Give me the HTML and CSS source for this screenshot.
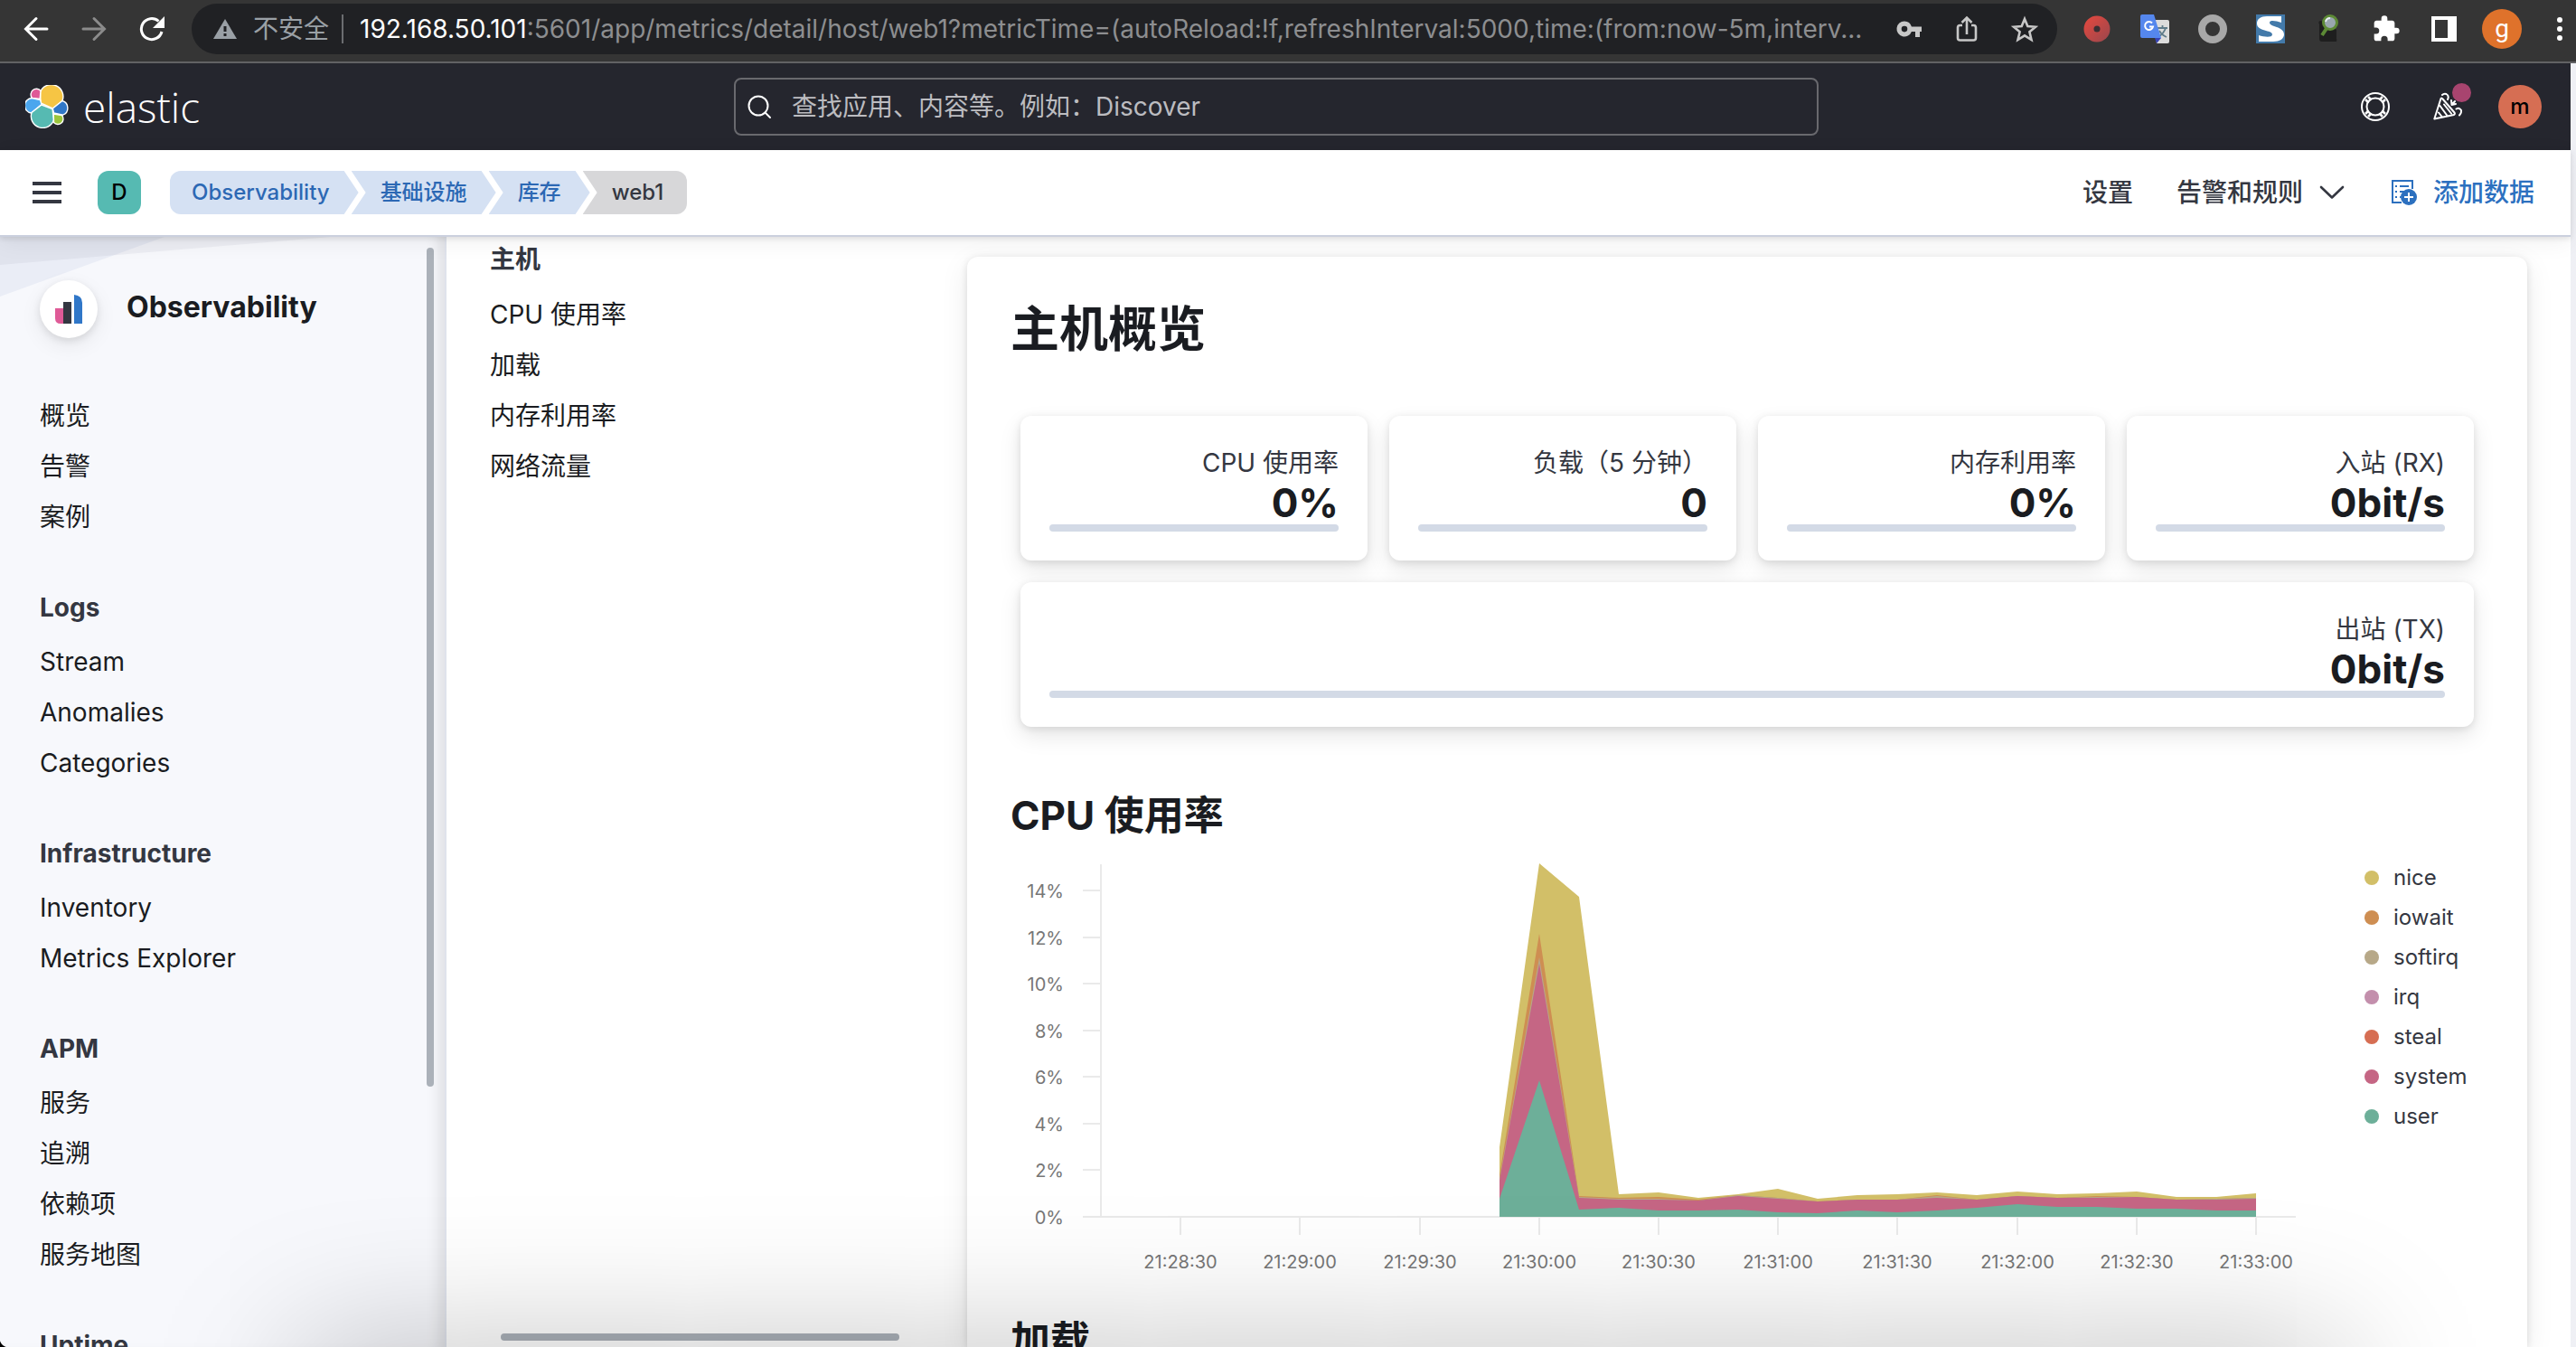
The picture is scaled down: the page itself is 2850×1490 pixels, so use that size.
FILE: index.html
```html
<!DOCTYPE html>
<html lang="zh-CN">
<head>
<meta charset="utf-8">
<title>web1 - 库存 - Observability - Elastic</title>
<link rel="stylesheet" href="styles.css">
</head>
<body>
<div class="browser">
  <button class="browser-btn" aria-label="后退"><svg width="28" height="28" viewBox="0 0 28 28"><path d="M26 14H3M14 2.500L2.500 14L14 25.500" fill="none" stroke="#fff" stroke-width="3" stroke-linecap="round"/></svg></button>
  <button class="browser-btn" aria-label="前进"><svg width="28" height="28" viewBox="0 0 28 28"><path d="M2 14H25M14 2.500L25.500 14L14 25.500" fill="none" stroke="#8b8b8b" stroke-width="3" stroke-linecap="round"/></svg></button>
  <button class="browser-btn" aria-label="重新加载"><svg width="28" height="28" viewBox="0 0 28 28"><path d="M25 17A11.500 11.500 0 1 1 21.500 5.500" fill="none" stroke="#fff" stroke-width="3"/><path d="M28 0V13H15Z" fill="#fff"/></svg></button>
  <div class="omnibox">
    <svg width="26" height="22" viewBox="0 0 26 22"><path d="M13 0L26 22H0Z" fill="#9aa0a6"/><path d="M11.500 8h3v6h-3zM11.500 16h3v3h-3z" fill="#202124"/></svg>
    <span class="insecure">不安全</span>
    <span class="omnibox-url"><b>192.168.50.101</b>:5601/app/metrics/detail/host/web1?metricTime=(autoReload:!f,refreshInterval:5000,time:(from:now-5m,interv...</span>
    <span class="omnibox-actions">
      <button aria-label="密码"><svg width="32" height="32" viewBox="0 0 32 32"><path d="M11 7.500a8.500 8.500 0 1 0 7.900 11.500H23v6h5v-6h2v-5.500H18.900A8.500 8.500 0 0 0 11 7.500zm0 5.300a3.300 3.300 0 1 1 0 6.600 3.300 3.300 0 0 1 0-6.600z" fill="#c7c7c7"/></svg></button>
      <button aria-label="分享"><svg width="32" height="32" viewBox="0 0 32 32"><path d="M11 12H8.500Q6 12 6 14.500V26Q6 28.500 8.500 28.500H23.500Q26 28.500 26 26V14.500Q26 12 23.500 12H21M16 22V4M10.500 9L16 3.500L21.500 9" fill="none" stroke="#c7c7c7" stroke-width="2.600"/></svg></button>
      <button aria-label="收藏"><svg width="32" height="32" viewBox="0 0 32 32"><path d="M16 5L19.300 13L28 13.700L21.400 19.300L23.500 28L16 23.300L8.500 28L10.600 19.300L4 13.700L12.700 13Z" fill="none" stroke="#c7c7c7" stroke-width="2.600"/></svg></button>
    </span>
  </div>
  <div class="extensions">
    <svg width="32" height="32" viewBox="0 0 32 32"><defs><linearGradient id="rec" x2="1" y2="1"><stop stop-color="#e8483e"/><stop offset="1" stop-color="#98474d"/></linearGradient></defs><circle cx="16" cy="16" r="14.500" fill="url(#rec)"/><circle cx="16" cy="16" r="3.500" fill="#3a2f33"/></svg>
    <svg width="32" height="32" viewBox="0 0 32 32"><path d="M15 6H30Q32 6 32 8V30Q32 32 30 32H18Z" fill="#dcdcdc"/><path d="M19 15H30M24.500 12V15M28 15Q26 21 20 25M21 18Q24 23 29 25" fill="none" stroke="#5f7c8a" stroke-width="1.800"/><path d="M16 26H23L18 32Z" fill="#3743b5"/><path d="M2 0H15L23 26H2Q0 26 0 24V2Q0 0 2 0Z" fill="#5587ed"/><path d="M13 9.500A4.500 4.500 0 1 0 14 13.500H10" fill="none" stroke="#fff" stroke-width="2"/></svg>
    <svg width="32" height="32" viewBox="0 0 32 32"><circle cx="16" cy="16" r="12" fill="none" stroke="#a8a8a8" stroke-width="8"/></svg>
    <svg width="32" height="32" viewBox="0 0 32 32"><path d="M0 0H32V32H0Z" fill="#437aaa"/><path d="M28 2H12C5 2 1 5 1 10C1 19 18 17 18 22C18 26 9 25 3 23V30H19C26 30 31 27 31 22C31 13 15 14 15 9C15 6 22 7 28 9Z" fill="#fff"/></svg>
    <svg width="32" height="32" viewBox="0 0 32 32"><path d="M8 7Q4 7 6 11V27Q6 30 9 30H24Q26 30 25 27V17" fill="#1e1e1e"/><path d="M15 14L9 23" stroke="#5c8a35" stroke-width="4"/><circle cx="18" cy="9" r="7.500" fill="#9aa7b0" stroke="#5d8a36" stroke-width="3"/><path d="M13 8A5 5 0 0 1 18 4" stroke="#e8eef2" stroke-width="2" fill="none"/></svg>
    <svg width="32" height="32" viewBox="0 0 24 24"><path d="M20.500 11H19V7c0-1.100-.9-2-2-2h-4V3.500a2.500 2.500 0 0 0-5 0V5H4c-1.100 0-2 .9-2 2v3.800h1.500a2.700 2.700 0 0 1 0 5.400H2V20c0 1.100.9 2 2 2h3.800v-1.500a2.700 2.700 0 0 1 5.400 0V22H17c1.100 0 2-.9 2-2v-4h1.500a2.500 2.500 0 0 0 0-5z" fill="#fff"/></svg>
    <svg width="32" height="32" viewBox="0 0 32 32"><path fill-rule="evenodd" d="M2 2H30V30H2ZM6 6V26H20V6Z" fill="#fff"/></svg>
  </div>
  <button class="profile">g</button>
  <button class="browser-menu" aria-label="菜单"><svg width="6" height="28" viewBox="0 0 6 28"><circle cx="3" cy="4" r="3"/><circle cx="3" cy="14" r="3"/><circle cx="3" cy="24" r="3"/></svg></button>
</div>

<div class="page">
  <header class="topbar">
    <a class="brand" href="#">
      <svg width="48" height="48" viewBox="0 0 48 48" stroke="#fff" stroke-width="1.400" stroke-linejoin="round">
        <path fill="#f6c544" d="M17 20L16.500 8A12.800 12.800 0 1 1 41 17.500L30.300 26Z"/>
        <path fill="#df5a97" d="M7.500 14.500A5.500 5.500 0 0 1 17 6.500L16.200 15.500Z"/>
        <path fill="#4ba6ee" d="M7.200 14.500L16.500 16.500L18 21.500L6.500 31A8.300 8.300 0 0 1 7.200 14.500Z"/>
        <path fill="#56bab2" d="M18 22L30 26.500L31.600 38.500A12.600 12.600 0 1 1 7 30.500Z"/>
        <path fill="#3077c8" d="M41 17.500A8.300 8.300 0 0 1 41.500 33.200L31.500 31L30.300 26Z"/>
        <path fill="#9bc53c" d="M31.200 32L40.500 33.500A5.300 5.300 0 0 1 31.500 41.500Z"/>
      </svg>
      <span class="brand-name">elastic</span>
    </a>
    <label class="search">
      <svg width="28" height="28" viewBox="0 0 28 28"><circle cx="13" cy="13" r="10.500" fill="none" stroke="#fff" stroke-width="2"/><path d="M20.500 20.500L26 26" stroke="#fff" stroke-width="2" stroke-linecap="round"/></svg>
      <input type="search" aria-label="搜索" placeholder="查找应用、内容等。例如：Discover">
    </label>
    <div class="topbar-actions">
      <button aria-label="帮助"><svg width="32" height="32" viewBox="0 0 32 32" fill="none" stroke="#fff" stroke-width="2"><circle cx="16" cy="16" r="15"/><circle cx="16" cy="16" r="9.500"/><path d="M5 8L8.500 11.500M8 5L11.500 8.500M24 5L20.500 8.500M27 8L23.500 11.500M5 24L8.500 20.500M8 27L11.500 23.500M27 24L23.500 20.500M24 27L20.500 23.500" stroke-width="2.600"/></svg></button>
      <button class="news" aria-label="新闻"><svg width="32" height="32" viewBox="0 0 32 32" fill="none" stroke="#fff" stroke-width="2" stroke-linecap="round" stroke-linejoin="round"><path d="M8.500 7L1.300 29.500L23 25Q24.500 24 23.500 22.500L10.500 7.500Q9.500 6 8.500 7ZM7.500 15L15.500 26M6 22.500L10 27.500M12 13.500L20 23.500M10 3Q12 1 14.500 2Q18 4 16 8M20 9L20.500 14L25 13M20.500 14L24 10M25.500 18.500Q29 16.500 31 20Q31.500 23 29 25.500"/></svg><span class="news-dot"></span></button>
      <button class="avatar">m</button>
    </div>
  </header>

  <div class="subbar">
    <button class="menu-toggle" aria-label="切换主导航"><span></span><span></span><span></span></button>
    <button class="space">D</button>
    <nav class="crumbs" aria-label="面包屑">
      <a href="#">Observability</a>
      <a href="#">基础设施</a>
      <a href="#">库存</a>
      <span aria-current="page">web1</span>
    </nav>
    <div class="subbar-links">
      <a href="#">设置</a>
      <button>告警和规则<svg width="28" height="16" viewBox="0 0 28 16"><path d="M2 2L14 13.500L26 2" fill="none" stroke="#343741" stroke-width="2.600" stroke-linecap="round" stroke-linejoin="round"/></svg></button>
      <a class="add-data" href="#"><svg width="28" height="28" viewBox="0 0 28 28"><path d="M11 25H1V1H23V10M9 7H19M9 13H15M9 19H10" fill="none" stroke="#2c70bf" stroke-width="2"/><path d="M4 6h2v2H4zM4 12h2v2H4zM4 18h2v2H4z" fill="#2c70bf"/><circle cx="19" cy="19" r="9" fill="#2c70bf"/><path d="M19 14V24M14 19H24" stroke="#fff" stroke-width="2"/></svg>添加数据</a>
    </div>
  </div>

  <div class="workspace">
    <aside class="sidebar">
      <svg class="sidebar-art" width="366" height="66" viewBox="0 0 366 66"><path d="M0 0H182L0 66Z" fill="#5b74b5" fill-opacity=".08"/><path d="M0 0H366L0 31Z" fill="#3c4664" fill-opacity=".06"/></svg>
      <div class="solution">
        <span class="solution-icon"><svg width="32" height="32" viewBox="0 0 32 32"><path d="M1 15H10V32H7Q1 32 1 26Z" fill="#df5a97"/><path d="M10 8H19V32H10Z" fill="#343741"/><path d="M22 0Q31 1 31 9V32H22Z" fill="#3077c8"/></svg></span>
        <h2>Observability</h2>
      </div>
      <nav class="side-nav">
        <ul><li><a href="#">概览</a></li><li><a href="#">告警</a></li><li><a href="#">案例</a></li></ul>
        <h3>Logs</h3>
        <ul><li><a href="#">Stream</a></li><li><a href="#">Anomalies</a></li><li><a href="#">Categories</a></li></ul>
        <h3>Infrastructure</h3>
        <ul><li><a href="#">Inventory</a></li><li><a href="#">Metrics Explorer</a></li></ul>
        <h3>APM</h3>
        <ul><li><a href="#">服务</a></li><li><a href="#">追溯</a></li><li><a href="#">依赖项</a></li><li><a href="#">服务地图</a></li></ul>
        <h3>Uptime</h3>
      </nav>
      <span class="thumb thumb-vertical"></span>
    </aside>

    <div class="content">
      <nav class="sections">
        <h3>主机</h3>
        <ul><li><a href="#cpu">CPU 使用率</a></li><li><a href="#load">加载</a></li><li><a href="#memory">内存利用率</a></li><li><a href="#network">网络流量</a></li></ul>
        <span class="thumb thumb-horizontal"></span>
      </nav>

      <main class="panel">
        <h1>主机概览</h1>
        <div class="stats">
          <div class="stat"><label for="s1">CPU 使用率</label><strong>0%</strong><progress id="s1" value="0" max="1"></progress></div>
          <div class="stat"><label for="s2">负载（5 分钟）</label><strong>0</strong><progress id="s2" value="0" max="1"></progress></div>
          <div class="stat"><label for="s3">内存利用率</label><strong>0%</strong><progress id="s3" value="0" max="1"></progress></div>
          <div class="stat"><label for="s4">入站 (RX)</label><strong>0bit/s</strong><progress id="s4" value="0" max="1"></progress></div>
          <div class="stat stat-wide"><label for="s5">出站 (TX)</label><strong>0bit/s</strong><progress id="s5" value="0" max="1"></progress></div>
        </div>

        <h2 id="cpu">CPU 使用率</h2>
        <div class="chart">
          <svg class="plot" viewBox="-2 0 1498 460" role="img" aria-label="CPU 使用率">
            <path class="axis" d="M98 5V395M78 395H1420M78 34H98M78 86H98M78 137H98M78 189H98M78 240H98M78 292H98M78 343H98"/>
            <path class="axis" d="M186 396V415M318 396V415M451 396V415M583 396V415M715 396V415M847 396V415M979 396V415M1112 396V415M1244 396V415M1376 396V415"/>
            <g class="tick tick-y">
              <text x="57" y="42">14%</text><text x="57" y="94">12%</text><text x="57" y="145">10%</text><text x="57" y="197">8%</text><text x="57" y="248">6%</text><text x="57" y="300">4%</text><text x="57" y="351">2%</text><text x="57" y="403">0%</text>
            </g>
            <g class="tick tick-x">
              <text x="186" y="452">21:28:30</text><text x="318" y="452">21:29:00</text><text x="451" y="452">21:29:30</text><text x="583" y="452">21:30:00</text><text x="715" y="452">21:30:30</text><text x="847" y="452">21:31:00</text><text x="979" y="452">21:31:30</text><text x="1112" y="452">21:32:00</text><text x="1244" y="452">21:32:30</text><text x="1376" y="452">21:33:00</text>
            </g>
            <polygon class="s-nice" points="539,395 539,318 583,4 627,41 671,370 715,368 759,374 803,370 847,364 891,375 935,371 979,370 1023,368 1067,371 1112,367 1156,370 1200,369 1244,367 1288,373 1332,373 1376,369 1376,395"/>
            <polygon class="s-iowait" points="539,395 539,349 583,82 627,372 671,374 715,373 759,376 803,371 847,374 891,378 935,376 979,376 1023,371 1067,376 1112,372 1156,374 1200,372 1244,373 1288,376 1332,375 1376,374 1376,395"/>
            <polygon class="s-softirq" points="539,395 539,353 583,108 627,373 671,375 715,375 759,377 803,371 847,374 891,378 935,376 979,376 1023,372 1067,376 1112,372 1156,374 1200,373 1244,373 1288,376 1332,375 1376,374 1376,395"/>
            <polygon class="s-system" points="539,395 539,355 583,115 627,374 671,376 715,376 759,377 803,372 847,375 891,378 935,376 979,376 1023,374 1067,376 1112,372 1156,374 1200,374 1244,373 1288,376 1332,376 1376,375 1376,395"/>
            <polygon class="s-user" points="539,395 539,375 583,244 627,387 671,385 715,388 759,388 803,387 847,390 891,391 935,388 979,390 1023,388 1067,385 1112,381 1156,384 1200,384 1244,386 1288,386 1332,388 1376,388 1376,395"/>
          </svg>
          <ul class="legend">
            <li><button class="s-nice">nice</button></li>
            <li><button class="s-iowait">iowait</button></li>
            <li><button class="s-softirq">softirq</button></li>
            <li><button class="s-irq">irq</button></li>
            <li><button class="s-steal">steal</button></li>
            <li><button class="s-system">system</button></li>
            <li><button class="s-user">user</button></li>
          </ul>
        </div>
        <h2 id="load">加载</h2>
      </main>
    </div>
  </div>
</div>
<div class="dock-shadow"></div>
<div class="window-corner"></div>
</body>
</html>
```
FILE: styles.css
```css
* { box-sizing: border-box; }

body {
  margin: 0;
  height: 100vh;
  display: flex;
  flex-direction: column;
  overflow: hidden;
  position: relative;
  background: #fff;
  color: #1a1c21;
  font: 400 28px/56px Inter, "Noto Sans CJK SC", sans-serif;
}

h1, h2, h3, ul { margin: 0; padding: 0; }
ul { list-style: none; }
a { color: inherit; text-decoration: none; }
button { margin: 0; padding: 0; border: 0; background: none; color: inherit; font: inherit; display: flex; align-items: center; }
svg { display: block; flex: none; }

/* Browser toolbar */
.browser {
  flex: none;
  height: 70px;
  padding: 0 15px 4px 26px;
  display: flex;
  align-items: center;
  background: #353535;
  border-bottom: 2px solid #626264;
}
.browser-btn { margin-right: 36px; }
.browser-btn:nth-child(3) { margin-right: 30px; }
.omnibox {
  flex: 1;
  min-width: 0;
  height: 56px;
  padding: 0 20px 0 24px;
  display: flex;
  align-items: center;
  border-radius: 28px;
  background: #202124;
  color: #8d8e90;
}
.insecure {
  margin-left: 18px;
  padding-right: 14px;
  line-height: 32px;
  border-right: 2px solid #6b6d70;
  color: #9aa0a6;
}
.omnibox-url {
  flex: 1;
  min-width: 0;
  margin-left: 18px;
  overflow: hidden;
  white-space: nowrap;
}
.omnibox-url b { color: #fff; font-weight: 400; }
.omnibox-actions { display: flex; gap: 32px; }
.extensions { margin-left: 28px; display: flex; gap: 32px; }
.profile {
  width: 44px;
  height: 44px;
  margin: 0 39px 0 26px;
  justify-content: center;
  border-radius: 50%;
  background: #df722b;
  color: #fff;
  font-family: Roboto, sans-serif;
}
.browser-menu { fill: #fff; }

/* Page frame: a light scroll gutter runs down the right edge */
.page {
  flex: 1;
  min-height: 0;
  display: flex;
  flex-direction: column;
  margin-right: 6px;
  box-shadow: 6px 0 #eff0f5;
}

/* Dark header */
.topbar {
  flex: none;
  height: 96px;
  padding: 0 32px 0 12px;
  display: grid;
  grid-template-columns: 1fr minmax(0, 1200px) 1fr;
  align-items: center;
  background: #25262e;
}
.brand { display: flex; align-items: center; gap: 16px; padding-left: 16px; color: #fff; }
.brand-name { font: 300 46px/48px "Open Sans", sans-serif; }
.search {
  height: 64px;
  padding: 0 12px;
  display: flex;
  align-items: center;
  gap: 22px;
  border: 2px solid #69696e;
  border-radius: 8px;
}
.search input {
  flex: 1;
  min-width: 0;
  height: 56px;
  padding: 0;
  border: 0;
  outline: 0;
  background: none;
  color: #fff;
  font: inherit;
}
.search input::placeholder { color: #bcbcc0; }
.topbar-actions { display: flex; justify-content: flex-end; align-items: center; gap: 48px; }
.news { position: relative; }
.news-dot { position: absolute; top: -10px; right: -10px; width: 21px; height: 21px; border-radius: 50%; background: #a8446f; }
.avatar {
  width: 48px;
  height: 48px;
  margin-left: -8px;
  justify-content: center;
  border-radius: 50%;
  background: #d66e53;
  color: #000;
  font-size: 24px;
  font-weight: 500;
}

/* Breadcrumb bar */
.subbar {
  flex: none;
  height: 96px;
  padding: 0 40px 0 36px;
  display: flex;
  align-items: center;
  position: relative;
  z-index: 2;
  background: #fff;
  border-bottom: 2px solid #cbd0de;
  box-shadow: 0 2px 6px rgba(0, 0, 0, .1), 0 6px 24px rgba(0, 0, 0, .06);
}
.menu-toggle { flex-direction: column; gap: 6px; width: 32px; }
.menu-toggle span { width: 32px; height: 4px; background: #343741; }
.space {
  width: 48px;
  height: 48px;
  margin: 0 32px 0 40px;
  justify-content: center;
  border-radius: 12px;
  background: #56bab2;
  color: #000;
  font-size: 24px;
  font-weight: 500;
}
.crumbs { display: flex; font-size: 24px; font-weight: 500; line-height: 48px; color: #2c68b4; }
.crumbs > * {
  margin-right: -8px;
  padding: 0 32px;
  background: #d5e1f3;
  clip-path: polygon(0 0, calc(100% - 16px) 0, 100% 50%, calc(100% - 16px) 100%, 0 100%, 16px 50%);
}
.crumbs > :first-child {
  padding-left: 24px;
  border-radius: 12px 0 0 12px;
  clip-path: polygon(0 0, calc(100% - 16px) 0, 100% 50%, calc(100% - 16px) 100%, 0 100%);
}
.crumbs > :last-child {
  padding-right: 26px;
  border-radius: 0 12px 12px 0;
  background: #d7d7d9;
  color: #343741;
  clip-path: polygon(0 0, 100% 0, 100% 100%, 0 100%, 16px 50%);
}
.subbar-links { margin-left: auto; display: flex; gap: 48px; font-weight: 500; color: #343741; }
.subbar-links button { gap: 18px; }
.add-data { display: flex; align-items: center; gap: 18px; margin-left: 4px; color: #2c70bf; }

/* Sidebar */
.workspace { flex: 1; min-height: 0; display: flex; }
.sidebar {
  flex: none;
  width: 494px;
  padding: 48px 44px 0;
  position: relative;
  overflow: hidden;
  background: #f7f8fc;
  border-right: 2px solid #dfe3ec;
  box-shadow: inset -16px 0 16px -10px rgba(0, 0, 0, .1);
}
.sidebar-art { position: absolute; top: 0; left: 0; }
.solution { position: relative; display: flex; gap: 32px; margin-bottom: 58px; }
.solution h2 { font-size: 32px; font-weight: 700; line-height: 60px; }
.solution-icon {
  flex: none;
  width: 64px;
  height: 64px;
  display: grid;
  place-items: center;
  border-radius: 50%;
  background: #fff;
  box-shadow: 0 3px 8px rgba(0, 0, 0, .1), 0 8px 24px rgba(0, 0, 0, .07);
}
.side-nav h3, .sections h3 { font-size: 28px; font-weight: 700; color: #343741; }
.side-nav h3 { margin: 44px 0 4px; }
.thumb { position: absolute; border-radius: 4px; background: #abb1b9; }
.thumb-vertical { top: 12px; right: 12px; bottom: 288px; width: 8px; }
.thumb-horizontal { left: 60px; right: 75px; bottom: 7px; height: 8px; }

/* Metrics detail */
.content { flex: 1; min-width: 0; display: flex; padding-right: 48px; overflow: hidden; }
.sections { flex: none; width: 576px; padding-left: 48px; position: relative; }
.sections h3 { margin-bottom: 8px; line-height: 50px; }
.panel {
  flex: 1;
  min-width: 0;
  margin-top: 22px;
  padding: 48px 48px 0;
  border-radius: 12px 12px 0 0;
  background: #fff;
  box-shadow: 0 2px 8px rgba(0, 0, 0, .12), 0 8px 32px rgba(0, 0, 0, .08);
}
.panel h1 { margin-bottom: 62px; font-size: 54px; font-weight: 700; line-height: 66px; }
.panel h2 { font-size: 44px; font-weight: 700; line-height: 56px; }
.stats { display: grid; grid-template-columns: repeat(4, minmax(0, 1fr)); gap: 24px; margin: 0 11px 70px; }
.stat {
  padding: 32px;
  display: flex;
  flex-direction: column;
  text-align: right;
  border-radius: 12px;
  background: #fff;
  box-shadow: 0 2px 8px rgba(0, 0, 0, .1), 0 10px 24px rgba(0, 0, 0, .1);
}
.stat-wide { grid-column: 1 / -1; }
.stat label { line-height: 40px; color: #343741; }
.stat strong { font-size: 44px; font-weight: 700; line-height: 48px; }
progress { display: block; appearance: none; width: 100%; height: 8px; border: 0; border-radius: 4px; overflow: hidden; background: #d3dae6; }
progress::-webkit-progress-bar { background: #d3dae6; }

.chart { display: flex; margin: 21px 0 44px; }
.plot { flex: 1; min-width: 0; }
.axis { fill: none; stroke: #eaeaea; stroke-width: 2; }
.tick { font-size: 20px; fill: #777; }
.tick-y { text-anchor: end; }
.tick-x { text-anchor: middle; }
.legend { flex: none; width: 132px; margin-top: -2px; font-size: 24px; line-height: 44px; }
.legend button { gap: 16px; }
.legend button::before { content: ""; width: 16px; height: 16px; border-radius: 50%; background: var(--series); }
.plot polygon { fill: var(--series); }
.legend button { color: #343741; }

.s-nice { --series: #d2bf68; }
.s-iowait { --series: #ce8e52; }
.s-softirq { --series: #b7a888; }
.s-irq { --series: #c38fac; }
.s-steal { --series: #d66e53; }
.s-system { --series: #c56684; }
.s-user { --series: #6daf99; }

/* Shade cast by the desktop dock just under the window */
.dock-shadow {
  position: absolute;
  z-index: 5;
  left: 330px;
  right: 260px;
  top: 100%;
  height: 200px;
  box-shadow: 0 0 160px rgba(0, 0, 0, .26);
  pointer-events: none;
}
.window-corner {
  position: absolute;
  z-index: 6;
  left: 0;
  bottom: 0;
  width: 10px;
  height: 10px;
  background: radial-gradient(circle at 100% 0, transparent 10px, #000 11px);
}
```
